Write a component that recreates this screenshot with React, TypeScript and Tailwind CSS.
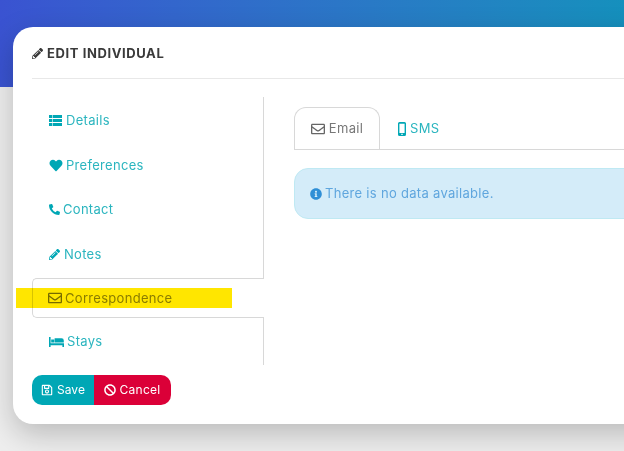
import { FaBan, FaHeart, FaInfoCircle, FaPencilAlt, FaPhoneAlt, FaRegEnvelope, FaRegSave } from "react-icons/fa";

const ListIcon = ({ className }: { className?: string }) => (
  <svg viewBox="0 0 13 11" fill="currentColor" className={className}>
    <path d="M0 0h3v3H0zM3.6 0H13v3H3.6zM0 4h3v3H0zM3.6 4H13v3H3.6zM0 8h3v3H0zM3.6 8H13v3H3.6z" />
  </svg>
);

const BedIcon = ({ className }: { className?: string }) => (
  <svg viewBox="0 0 15 10" fill="currentColor" className={className}>
    <path d="M0 0h1.6v6.2H15V10h-1.6V8.2H1.6V10H0z" />
    <path d="M2.2 2.4h3v3.2h-3zM5.6 1.2h7a2.2 2.2 0 0 1 2.2 2.2v2.2H5.6z" />
  </svg>
);

const MobileIcon = ({ className }: { className?: string }) => (
  <svg viewBox="0 0 8 14" className={className}>
    <path fillRule="evenodd" fill="currentColor" d="M1.5 0h5A1.5 1.5 0 0 1 8 1.5v11A1.5 1.5 0 0 1 6.5 14h-5A1.5 1.5 0 0 1 0 12.5v-11A1.5 1.5 0 0 1 1.5 0zM1.4 1.8v9.2h5.2V1.8zM3.3 11.8v1.2h1.4v-1.2z" />
  </svg>
);

const navItems = [
  { icon: ListIcon, label: "Details", height: "h-[46px]", gap: "gap-[4px]", size: "h-[11px] w-[13px]" },
  { icon: FaHeart, label: "Preferences", height: "h-[44px]", gap: "gap-[3px]", size: "h-[13px] w-[14px]" },
  { icon: FaPhoneAlt, label: "Contact", height: "h-[44px]", gap: "gap-[3px]", size: "h-[11px] w-[11px]" },
  { icon: FaPencilAlt, label: "Notes", height: "h-[47px]", gap: "gap-[4px]", size: "h-[11px] w-[11px]" },
];

const App = () => {
  return (
    <div className="relative h-[451px] w-[624px] overflow-hidden bg-[#eeeeee] font-['Inter','Liberation_Sans',sans-serif] text-[13px] tracking-[0.3px]">
      {/* Gradient header band behind the card */}
      <div className="absolute inset-x-0 top-0 h-[87px] bg-gradient-to-r from-[#3a53d1] to-[#1590bd]"></div>

      <div className="relative pl-[13px] pt-[27px]">
        <div className="w-[680px] h-[397px] rounded-[20px] bg-white pl-[19px] shadow-[0_10px_30px_rgba(0,0,0,0.22)]">
          <div className="flex h-[52px] items-center gap-[4px] border-b border-[#e8e8e8] pt-[2px] font-bold text-[#3a3a3a]">
            <FaPencilAlt className="h-[11px] w-[11px]" />
            <span className="tracking-[0.6px]">EDIT INDIVIDUAL</span>
          </div>

          <div className="mt-[18px] flex">
            <div className="w-[232px] text-[#2bb5bf]">
              {navItems.map((item) => (
                <div key={item.label} className={`flex items-center border-r border-[#d8d8d8] pl-[17px] ${item.height} ${item.gap}`}>
                  <item.icon className={`text-[#00a7b5] ${item.size}`} />
                  <span className="pt-[1px]">{item.label}</span>
                </div>
              ))}
              <div className="flex h-[40px] items-center gap-[3px] rounded-l-[5px] border border-r-0 border-[#d8d8d8] pl-[15px] text-[#8a8a8a]">
                <FaRegEnvelope className="h-[14px] w-[14px] text-[#777777]" />
                <span className="pt-[1px]">Correspondence</span>
              </div>
              <div className="flex h-[47px] items-center gap-[3px] border-r border-[#d8d8d8] pl-[17px]">
                <BedIcon className="h-[10px] w-[15px] text-[#00a7b5]" />
                <span className="pt-[1px]">Stays</span>
              </div>
            </div>

            <div className="ml-[30px] flex-1 pt-[10px]">
              <div className="flex h-[43px] border-b border-[#d8d8d8]">
                <div className="flex h-[42px] w-[86px] items-center justify-center gap-[4px] rounded-t-[12px] border border-b-0 border-[#d8d8d8] text-[#777777]">
                  <FaRegEnvelope className="h-[14px] w-[14px] text-[#666666]" />
                  <span>Email</span>
                </div>
                <div className="ml-[18px] flex items-center gap-[4px] pt-[1px] text-[#2bb5bf]">
                  <MobileIcon className="h-[14px] w-[8px] text-[#00a7b5]" />
                  <span>SMS</span>
                </div>
              </div>
              <div className="mt-[18px] flex h-[51px] items-center gap-[3px] rounded-[14px] border border-[#bfe9f3] bg-[#d4ecf9] pl-[15px] text-[#5fa6de]">
                <FaInfoCircle className="h-[12px] w-[12px] text-[#2f8fd6]" />
                <span>There is no data available.</span>
              </div>
            </div>
          </div>

          <div className="mt-[10px] flex h-[30px] w-[139px] overflow-hidden rounded-[10px] text-[12px] text-white">
            <div className="flex w-[62px] items-center justify-center gap-[4px] bg-[#00a7b5] tracking-normal">
              <FaRegSave className="h-[12px] w-[12px]" />
              <span>Save</span>
            </div>
            <div className="flex flex-1 items-center justify-center gap-[3px] bg-[#db0038]">
              <FaBan className="h-[12px] w-[12px]" />
              <span>Cancel</span>
            </div>
          </div>
        </div>
      </div>

      {/* Highlighter mark over the active item */}
      <div className="absolute left-[16px] top-[288px] h-[20px] w-[216px] bg-[#ffe600] mix-blend-multiply"></div>
    </div>
  );
};

export default App;
